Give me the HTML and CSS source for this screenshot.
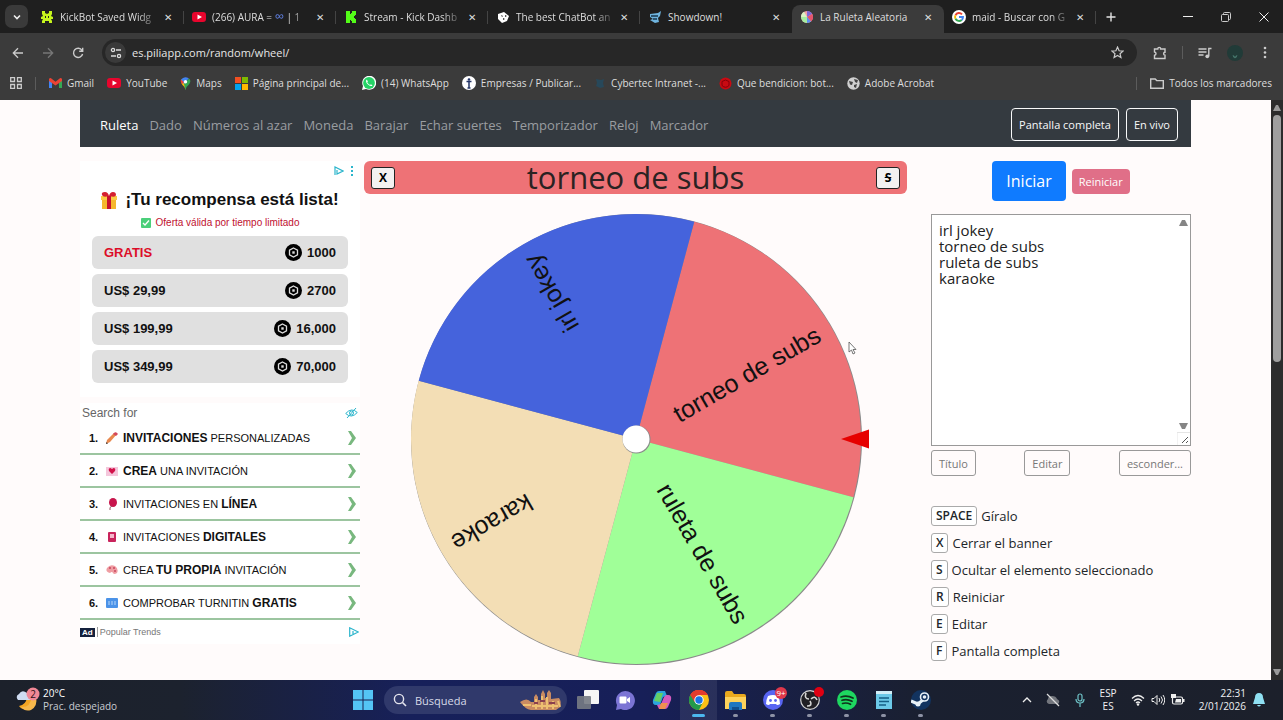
FILE: index.html
```html
<!DOCTYPE html>
<html lang="es">
<head>
    <meta charset="UTF-8">
    <meta name="viewport" content="width=device-width, initial-scale=1.0">
    <title>La Ruleta Aleatoria</title>
    <link rel="stylesheet" href="styles.css">
</head>
<body>
    <!-- Browser tabs -->
    <header class="tabs">
        <button class="tab-search" aria-label="Buscar pestañas"><svg width="10" height="10" viewBox="0 0 10 10"><path d="M2 3.5l3 3 3-3" fill="none" stroke="#eee" stroke-width="1.6"/></svg></button>
        <div class="tab">
            <svg class="fav" viewBox="0 0 12 12"><path d="M1 0h3v2l2 1 2-1V0h3v3l-1 2 2 1v2h-2l1 2v2H8v-2H4v2H1v-2l1-2H0V6l2-1-1-2z" fill="#c6f51d"/><path d="M4 5h1v2H4zM7 5h1v2H7z" fill="#222"/></svg>
            <span class="tab-title faded">KickBot Saved Widg</span><button class="close" aria-label="Cerrar">✕</button>
        </div>
        <div class="tab">
            <svg class="fav wide" viewBox="0 0 14 12"><rect y="1" width="14" height="10" rx="3" fill="#e8052d"/><path d="M5.500 3.500L10 6 5.500 8.500z" fill="#fff"/></svg>
            <span class="tab-title faded">(266) AURA = <span class="inf">∞</span> | 1</span><button class="close" aria-label="Cerrar">✕</button>
        </div>
        <div class="tab">
            <svg class="fav" viewBox="0 0 12 12"><path d="M1 0h4v3h1V2h1V0h4v4h-1v1H9v2h1v1h1v4H7v-2H6V9H5v3H1z" fill="#53fc18"/></svg>
            <span class="tab-title faded">Stream - Kick Dashb</span><button class="close" aria-label="Cerrar">✕</button>
        </div>
        <div class="tab">
            <svg class="fav" viewBox="0 0 12 12"><path d="M1 3l6-2 5 4-2 5-5 2-4-4z" fill="#fff"/><path d="M4 4l2 1-1 1zM8 4l2 1-2 1zM6 7l2 1-2 1z" fill="#222"/></svg>
            <span class="tab-title faded">The best ChatBot an</span><button class="close" aria-label="Cerrar">✕</button>
        </div>
        <div class="tab">
            <svg class="fav" viewBox="0 0 12 12"><path d="M1 3l8-1 3-2-1 5-2 2 1 4-4 1-5-3 3-1-3-2z" fill="#6fb4de"/><path d="M2 5h7M4 8h4" stroke="#17364d" stroke-width="1.300"/></svg>
            <span class="tab-title">Showdown!</span><button class="close" aria-label="Cerrar">✕</button>
        </div>
        <div class="tab active">
            <svg class="fav" viewBox="-6 -6 12 12"><circle r="6" fill="#f3a5a8"/><path d="M0 0V-6A6 6 0 0 1 5.200-3z" fill="#7b68d8"/><path d="M0 0L5.200-3A6 6 0 0 1 4 4.500z" fill="#e4556d"/><path d="M0 0L4 4.500A6 6 0 0 1 0 6z" fill="#5b8ff0"/><path d="M0 0V6A6 6 0 0 1-6 0z" fill="#a5eda0"/><path d="M0 0H-6A6 6 0 0 1-3-5.200z" fill="#d9f2c4"/></svg>
            <span class="tab-title">La Ruleta Aleatoria</span><button class="close" aria-label="Cerrar">✕</button>
        </div>
        <div class="tab last">
            <svg class="fav wide" viewBox="0 0 14 14"><circle cx="7" cy="7" r="7" fill="#fff"/><g fill="none" stroke-width="1.900"><path d="M10 4.300A4 4 0 0 0 3.500 5.200" stroke="#ea4335"/><path d="M3.500 5.200a4 4 0 0 0 0 3.600" stroke="#fbbc05"/><path d="M3.500 8.800A4 4 0 0 0 9.700 10" stroke="#34a853"/><path d="M9.700 10A4 4 0 0 0 11 7H7" stroke="#4285f4"/></g></svg>
            <span class="tab-title faded">maid - Buscar con G</span><button class="close" aria-label="Cerrar">✕</button>
        </div>
        <button class="new-tab" aria-label="Nueva pestaña"><svg width="10" height="10" viewBox="0 0 10 10"><path d="M5 0.500v9M0.500 5h9" stroke="#e3e3e3" stroke-width="1.400"/></svg></button>
        <div class="win-controls">
            <button aria-label="Minimizar"><svg width="10" height="10" viewBox="0 0 10 10"><path d="M0 4.500h10" stroke="#eee"/></svg></button>
            <button aria-label="Restaurar"><svg width="10" height="10" viewBox="0 0 10 10"><path d="M2.500 2V1.500q0-1 1-1h5q1 0 1 1v5q0 1-1 1H8" fill="none" stroke="#ccc"/><rect x=".5" y="2.500" width="7" height="7" rx="1" fill="none" stroke="#ccc"/></svg></button>
            <button aria-label="Cerrar ventana"><svg width="10" height="10" viewBox="0 0 10 10"><path d="M.5.5l9 9M9.500.5l-9 9" stroke="#eee"/></svg></button>
        </div>
    </header>

    <!-- Address bar -->
    <div class="toolbar">
        <button aria-label="Atrás"><svg width="12" height="12" viewBox="0 0 12 12"><path d="M11 6H1.500M6 1.300L1.300 6 6 10.700" fill="none" stroke="#ccc" stroke-width="1.300"/></svg></button>
        <button aria-label="Adelante"><svg width="12" height="12" viewBox="0 0 12 12"><path d="M1 6h9.500M6 1.300L10.700 6 6 10.700" fill="none" stroke="#777" stroke-width="1.300"/></svg></button>
        <button aria-label="Recargar"><svg width="12" height="12" viewBox="0 0 12 12"><path d="M10 3.400A4.600 4.600 0 1 0 10.600 7M10.700.8V4.200H7.200" fill="none" stroke="#ccc" stroke-width="1.400"/></svg></button>
        <div class="omnibox">
            <button class="site-info" aria-label="Información del sitio"><svg width="12" height="12" viewBox="0 0 12 12"><g fill="none" stroke="#ddd" stroke-width="1.300"><circle cx="3" cy="3" r="1.600"/><path d="M6 3h5M1 9h5"/><circle cx="9" cy="9" r="1.600"/></g></svg></button>
            <input type="text" aria-label="Dirección" value="es.piliapp.com/random/wheel/">
            <button aria-label="Favorito"><svg width="13" height="13" viewBox="0 0 14 14"><path d="M7 1.200l1.700 3.900 4.200.4-3.200 2.800 1 4.200L7 10.300l-3.700 2.200 1-4.200L1.100 5.500l4.200-.4z" fill="none" stroke="#ccc" stroke-width="1.300"/></svg></button>
        </div>
        <div class="tools">
            <button aria-label="Extensiones"><svg width="14" height="14" viewBox="0 0 14 14"><path d="M1.500 3h3.300q0-1.600 1.400-1.600T7.600 3H12v3.300q-1.400 0-1.400 1.400T12 9.100v3.400H1.500V9.300q1.500-.2 1.500-1.600T1.500 6z" fill="none" stroke="#ccc" stroke-width="1.400"/></svg></button>
            <span class="sep"></span>
            <button aria-label="Multimedia"><svg width="14" height="12" viewBox="0 0 14 12"><path d="M.5 2h8M.5 5h8M.5 8h5M10.800 9V1.500H13.500" fill="none" stroke="#ccc" stroke-width="1.400"/><circle cx="9.300" cy="9.300" r="1.900" fill="#ccc"/></svg></button>
            <button aria-label="Perfil"><svg width="16" height="16" viewBox="0 0 16 16"><circle cx="8" cy="8" r="8" fill="#213b38"/><path d="M5.500 10l2 1 .5 3 .5-3 2-1-1.500 3H7z" fill="#4f8578"/></svg></button>
            <button class="menu" aria-label="Menú"><svg width="4" height="13" viewBox="0 0 4 13"><g fill="#ccc"><circle cx="2" cy="2" r="1.300"/><circle cx="2" cy="6.500" r="1.300"/><circle cx="2" cy="11" r="1.300"/></g></svg></button>
        </div>
    </div>

    <!-- Bookmarks -->
    <nav class="bookmarks" aria-label="Marcadores">
        <button aria-label="Aplicaciones"><svg width="12" height="12" viewBox="0 0 12 12"><path d="M.7.7h3.800v3.800H.7zM7.500.7h3.800v3.800H7.500zM.7 7.500h3.800v3.800H.7zM7.500 7.500h3.800v3.800H7.500z" fill="none" stroke="#ccc" stroke-width="1.300"/></svg></button>
        <span class="sep"></span>
        <a href="#"><svg width="13" height="10" viewBox="0 0 13 10"><path d="M0 1h3v9H0z" fill="#4285f4"/><path d="M10 1h3v9h-3z" fill="#34a853"/><path d="M0 1q1-2 3 0l3.500 2.700L10 1q2-2 3 0v2L6.500 7.500 0 3z" fill="#ea4335"/></svg>Gmail</a>
        <a href="#"><svg width="14" height="10" viewBox="0 0 14 10"><rect width="14" height="10" rx="3" fill="#e8052d"/><path d="M5.500 2.500L10 5 5.500 7.500z" fill="#fff"/></svg>YouTube</a>
        <a href="#"><svg width="11" height="13" viewBox="0 0 11 13"><path d="M5.500 13Q5 9.500 2.500 8 0 4 2 2l3.500 3z" fill="#fbbc05"/><path d="M5.500 13Q6 9.500 8.500 8 12 4 9 1.500L4 7z" fill="#34a853"/><path d="M1 2.700Q4-1.500 8.800 1.300L4 7z" fill="#4285f4"/><path d="M1 2.700L4 5 2 7Q0 4 1 2.700z" fill="#ea4335"/><circle cx="5.500" cy="4.700" r="1.700" fill="#fff"/></svg>Maps</a>
        <a href="#"><svg width="13" height="13" viewBox="0 0 13 13"><path d="M0 0h6v6H0z" fill="#f25022"/><path d="M7 0h6v6H7z" fill="#7fba00"/><path d="M0 7h6v6H0z" fill="#00a4ef"/><path d="M7 7h6v6H7z" fill="#ffb900"/></svg>Página principal de...</a>
        <a href="#"><svg width="14" height="14" viewBox="0 0 14 14"><path d="M0 14l1-4A7 7 0 1 1 4 13z" fill="#fff"/><circle cx="7" cy="7" r="5.900" fill="#25d366"/><path d="M4.500 3.500Q3 6 6 8.500T10.500 9.500L9 8.300 8 9Q6 8 5.200 6.200L6 5.300z" fill="#fff"/></svg>(14) WhatsApp</a>
        <a href="#"><svg width="14" height="14" viewBox="0 0 14 14"><circle cx="7" cy="7" r="7" fill="#fff"/><circle cx="7" cy="3.500" r="1.300" fill="#223366"/><path d="M4.500 5.500h5M7 5.500V12M5.500 12h3" stroke="#223366" stroke-width="1.500"/></svg>Empresas / Publicar...</a>
        <a href="#"><svg width="12" height="12" viewBox="0 0 12 12"><path d="M2 2l5 1 3-1-1 4 1 4-4 1-4-2 1-3z" fill="#27485a"/></svg>Cybertec Intranet -...</a>
        <a href="#"><svg width="13" height="13" viewBox="0 0 13 13"><circle cx="6.500" cy="6.500" r="6" fill="#c90a12"/><path d="M3 4.500q3.500-3 7 0v4q-3.500 3.500-7 0z" fill="none" stroke="#850008"/></svg>Que bendicion: bot...</a>
        <a href="#"><svg width="13" height="13" viewBox="0 0 13 13"><circle cx="6.500" cy="6.500" r="6.200" fill="#d0d0d0"/><path d="M2 4l4 1-1 3-2-.5zM7 2l4 1-1 3-2-1zM7 8l3-1-1 4-2-1z" fill="#444"/></svg>Adobe Acrobat</a>
        <span class="sep push"></span>
        <a href="#"><svg width="14" height="11" viewBox="0 0 14 11"><path d="M.7 1h4.500l1.500 1.600h6.600v7.700H.7z" fill="none" stroke="#ccc" stroke-width="1.400"/></svg>Todos los marcadores</a>
    </nav>

    <div class="viewport">
        <div class="page">
            <nav class="navbar">
                <a href="#" class="current">Ruleta</a>
                <a href="#">Dado</a>
                <a href="#">Números al azar</a>
                <a href="#">Moneda</a>
                <a href="#">Barajar</a>
                <a href="#">Echar suertes</a>
                <a href="#">Temporizador</a>
                <a href="#">Reloj</a>
                <a href="#">Marcador</a>
                <div class="nav-buttons">
                    <button>Pantalla completa</button>
                    <button>En vivo</button>
                </div>
            </nav>

            <main class="columns">
                <aside>
                    <section class="reward">
                        <div class="ad-marks">
                            <svg width="10" height="10" viewBox="0 0 10 10"><path d="M1 9V1l8 4-6 3V4" fill="none" stroke="#2bb5cc" stroke-width="1.200"/></svg>
                            <svg width="4" height="10" viewBox="0 0 4 10"><path d="M1 0h2v2H1zM1 4h2v2H1zM1 8h2v2H1z" fill="#2bb5cc"/></svg>
                        </div>
                        <h2><svg width="16" height="17" viewBox="0 0 16 17"><path d="M1 5h14v12H1z" fill="#f5b72e"/><path d="M0 4h16v4H0z" fill="#fbcb45"/><path d="M6 4h4v13H6z" fill="#c8102e"/><path d="M8 4Q2 6 1 3T4 0q3 0 4 4 1-4 4-4t3 3-7 1" fill="#d5202f"/></svg>¡Tu recompensa está lista!</h2>
                        <p class="offer"><svg width="10" height="10" viewBox="0 0 10 10"><rect width="10" height="10" rx="1" fill="#4bcf7a"/><path d="M2 5l2 2 4-4.500" fill="none" stroke="#fff" stroke-width="1.300"/></svg>Oferta válida por tiempo limitado</p>
                        <ul class="prices">
                            <li><span class="free">GRATIS</span><span class="amount"><svg class="coin" viewBox="0 0 17 17"><circle cx="8.500" cy="8.500" r="8.500"/><path d="M8.500 4l4 2.200v4.600l-4 2.200-4-2.200V6.200z" fill="none" stroke="#ddd" stroke-width="1.300"/><path d="M7.300 7.300h2.400v2.400H7.300z" fill="#ddd"/></svg>1000</span></li>
                            <li><span>US$ 29,99</span><span class="amount"><svg class="coin" viewBox="0 0 17 17"><circle cx="8.500" cy="8.500" r="8.500"/><path d="M8.500 4l4 2.200v4.600l-4 2.200-4-2.200V6.200z" fill="none" stroke="#ddd" stroke-width="1.300"/><path d="M7.300 7.300h2.400v2.400H7.300z" fill="#ddd"/></svg>2700</span></li>
                            <li><span>US$ 199,99</span><span class="amount"><svg class="coin" viewBox="0 0 17 17"><circle cx="8.500" cy="8.500" r="8.500"/><path d="M8.500 4l4 2.200v4.600l-4 2.200-4-2.200V6.200z" fill="none" stroke="#ddd" stroke-width="1.300"/><path d="M7.300 7.300h2.400v2.400H7.300z" fill="#ddd"/></svg>16,000</span></li>
                            <li><span>US$ 349,99</span><span class="amount"><svg class="coin" viewBox="0 0 17 17"><circle cx="8.500" cy="8.500" r="8.500"/><path d="M8.500 4l4 2.200v4.600l-4 2.200-4-2.200V6.200z" fill="none" stroke="#ddd" stroke-width="1.300"/><path d="M7.300 7.300h2.400v2.400H7.300z" fill="#ddd"/></svg>70,000</span></li>
                        </ul>
                    </section>

                    <section class="trends">
                        <div class="trends-head">Search for
                            <svg width="13" height="12" viewBox="0 0 13 12"><path d="M.7 6.500Q6.500 0 12.300 5.500 6.500 12 .7 6.500zM2 11l9-10" fill="none" stroke="#2bb5cc"/><circle cx="6.500" cy="6" r="2" fill="none" stroke="#2bb5cc"/></svg>
                        </div>
                        <ol>
                            <li><a href="#"><b>1.</b><svg class="emoji" viewBox="0 0 12 12"><path d="M0 12l1-4 7-7q2-1 3 1l-7 8z" fill="#e8894f"/><path d="M8 1q2-2 4 1l-2 2-3-2z" fill="#d4485c"/><path d="M0 12l.5-2L2 11.500z" fill="#333"/></svg><span><strong>INVITACIONES</strong> PERSONALIZADAS</span><svg class="chevron" viewBox="0 0 9 14"><path d="M1 0h3l5 7-5 7H1l4-7z" fill="#78b87f"/></svg></a></li>
                            <li><a href="#"><b>2.</b><svg class="emoji" viewBox="0 0 12 12"><path d="M0 2h12v9H0z" fill="#f4c6db"/><path d="M6 9L3 6q-1-3 1.500-3L6 4l1.500-1Q10 3 9 6z" fill="#d2124a"/></svg><span><strong>CREA</strong> UNA INVITACIÓN</span><svg class="chevron" viewBox="0 0 9 14"><path d="M1 0h3l5 7-5 7H1l4-7z" fill="#78b87f"/></svg></a></li>
                            <li><a href="#"><b>3.</b><svg class="emoji" viewBox="0 0 12 12"><ellipse cx="7" cy="4.500" rx="4" ry="4.500" fill="#c7154c"/><path d="M6 8q-3 1-2 4" stroke="#97505f" fill="none"/></svg><span>INVITACIONES EN <strong>LÍNEA</strong></span><svg class="chevron" viewBox="0 0 9 14"><path d="M1 0h3l5 7-5 7H1l4-7z" fill="#78b87f"/></svg></a></li>
                            <li><a href="#"><b>4.</b><svg class="emoji" viewBox="0 0 12 12"><rect x="2" y="1" width="8" height="10" rx="1" fill="#c9245c"/><path d="M4 3h4v4H4z" fill="#f5b6cb"/></svg><span>INVITACIONES <strong>DIGITALES</strong></span><svg class="chevron" viewBox="0 0 9 14"><path d="M1 0h3l5 7-5 7H1l4-7z" fill="#78b87f"/></svg></a></li>
                            <li><a href="#"><b>5.</b><svg class="emoji" viewBox="0 0 12 12"><path d="M1 4q3-4 8-2 4 3 2 7-3 2-4 0-1-2-3 0-5-1-3-5z" fill="#ef9da2"/><g fill="#c8475f"><circle cx="4" cy="4" r="1"/><circle cx="8" cy="4" r="1"/><circle cx="9" cy="7" r="1"/></g></svg><span>CREA <strong>TU PROPIA</strong> INVITACIÓN</span><svg class="chevron" viewBox="0 0 9 14"><path d="M1 0h3l5 7-5 7H1l4-7z" fill="#78b87f"/></svg></a></li>
                            <li><a href="#"><b>6.</b><svg class="emoji" viewBox="0 0 12 12"><rect y="1" width="12" height="10" rx="1" fill="#4b93e8"/><path d="M2 5h8M2 7h8" stroke="#b9d8fa" stroke-dasharray="2 1"/></svg><span>COMPROBAR TURNITIN <strong>GRATIS</strong></span><svg class="chevron" viewBox="0 0 9 14"><path d="M1 0h3l5 7-5 7H1l4-7z" fill="#78b87f"/></svg></a></li>
                        </ol>
                        <div class="trends-foot"><span class="ad-tag">Ad</span><span class="foot-text">Popular Trends</span>
                            <svg width="10" height="10" viewBox="0 0 10 10"><path d="M.7.8v8.400L9.300 5z M4 4v3" fill="none" stroke="#2bb5cc" stroke-width="1.200"/></svg>
                        </div>
                    </section>
                </aside>

                <section class="wheel-col">
                    <div class="banner">
                        <button>X</button>
                        <h1>torneo de subs</h1>
                        <button><s>S</s></button>
                    </div>
                    <svg class="wheel" viewBox="-234 -228 468 456">
                        <circle class="shadow" cx=".5" cy=".5" r="225.500"/>
                        <g transform="rotate(15)">
                            <path d="M0 0V-225A225 225 0 0 1 225 0z" fill="#ee7276"/>
                            <path d="M0 0H225A225 225 0 0 1 0 225z" fill="#a0ff98"/>
                            <path d="M0 0V225A225 225 0 0 1-225 0z" fill="#f3deb5"/>
                            <path d="M0 0H-225A225 225 0 0 1 0-225z" fill="#4563dc"/>
                        </g>
                        <g class="labels">
                            <text x="211" transform="rotate(-30)" dy="8">torneo de subs</text>
                            <text x="211" transform="rotate(60)" dy="8">ruleta de subs</text>
                            <text x="211" transform="rotate(150)" dy="8">karaoke</text>
                            <text x="211" transform="rotate(240)" dy="8">irl jokey</text>
                        </g>
                        <circle class="shadow" cx=".5" cy=".5" r="14"/>
                        <circle r="13.500" fill="#fff"/>
                        <path d="M205 0l28-9.500v19z" fill="#e60000"/>
                    </svg>
                    <svg class="cursor" width="9" height="14" viewBox="0 0 9 14"><path d="M1 1v10l2.500-2L5 13l2-1-2-3.500h3z" fill="#fff" stroke="#555" stroke-width=".8"/></svg>
                </section>

                <section class="side">
                    <div class="actions">
                        <button class="start">Iniciar</button>
                        <button class="reset">Reiniciar</button>
                    </div>
                    <div class="list-box">
                        <textarea aria-label="Elementos de la ruleta">irl jokey
torneo de subs
ruleta de subs
karaoke</textarea>
                        <svg class="arrow up" width="9" height="7" viewBox="0 0 9 7"><path d="M0 7l3-6h3l3 6z" fill="#858585"/></svg>
                        <svg class="arrow down" width="9" height="7" viewBox="0 0 9 7"><path d="M0 0l3 6h3l3-6z" fill="#858585"/></svg>
                        <svg class="grip" width="13" height="13" viewBox="0 0 13 13"><path d="M0 0h13v13H0z" fill="#fff"/><path d="M0 13V.5h13" fill="none" stroke="#e5e5e5"/><path d="M5 11l6-6M9 11l2-2" stroke="#555"/></svg>
                    </div>
                    <div class="list-actions">
                        <button>Título</button>
                        <button>Editar</button>
                        <button>esconder...</button>
                    </div>
                    <ul class="keys">
                        <li><kbd>SPACE</kbd>Gíralo</li>
                        <li><kbd>X</kbd>Cerrar el banner</li>
                        <li><kbd>S</kbd>Ocultar el elemento seleccionado</li>
                        <li><kbd>R</kbd>Reiniciar</li>
                        <li><kbd>E</kbd>Editar</li>
                        <li><kbd>F</kbd>Pantalla completa</li>
                    </ul>
                </section>
            </main>
        </div>
        <div class="scrollbar">
            <svg width="8" height="7" viewBox="0 0 8 7"><path d="M0 7l3-6h2l3 6z" fill="#999"/></svg>
            <div class="thumb"></div>
            <svg width="8" height="7" viewBox="0 0 8 7"><path d="M0 0l3 6h2l3-6z" fill="#999"/></svg>
        </div>
    </div>

    <!-- Taskbar -->
    <footer class="taskbar">
        <div class="weather">
            <svg width="26" height="28" viewBox="0 0 26 28"><path d="M16 10q5 9-5 13-5 1-8-3 7-1 8-9z" fill="#f5a623"/><path d="M20 11q2 9-5 13-6 2-10-3 9 1 11-10z" fill="#f7b84b"/><path d="M2 14q-3-4 1-6 3-5 8-1 5 2 4 7z" fill="#cfdcf2"/><circle cx="17" cy="8" r="6.500" fill="#f08896"/><text x="17" y="12" font-size="10" text-anchor="middle" fill="#301018">2</text></svg>
            <div><span class="temp">20°C</span><br>Prac. despejado</div>
        </div>
        <div class="apps">
            <button aria-label="Inicio"><svg width="20" height="20" viewBox="0 0 20 20"><path d="M0 0h9.500v9.500H0zM10.500 0H20v9.500h-9.500zM0 10.500h9.500V20H0zM10.500 10.500H20V20h-9.500z" fill="#54c4f5"/></svg></button>
            <label class="search">
                <svg width="14" height="14" viewBox="0 0 14 14"><circle cx="6" cy="6" r="4.600" fill="none" stroke="#e5e5ee" stroke-width="1.400"/><path d="M9.500 9.500L13 13" stroke="#e5e5ee" stroke-width="1.600"/></svg>
                <input type="text" placeholder="Búsqueda" aria-label="Búsqueda">
                <svg width="43" height="22" viewBox="0 0 43 22"><path d="M0 13q7-5 11 0h3V8l2-3 2 3v3h3V5l2-4 2 4v4h2V4l2-3 2 3v6l8-1q3 4 1 9l-4 3H11q-6-1-11-8z" fill="#c98b62"/><path d="M3 16h8M16 10v10M22 7v13M27 8v12M33 12v8M38 12l2 6M12 17h26" stroke="#eec071" stroke-width="2"/><path d="M14 14h4M20 12h5M29 14h6" stroke="#8a3f4d" stroke-width="2"/></svg>
            </label>
            <button aria-label="Vista de tareas"><svg width="22" height="20" viewBox="0 0 22 20"><rect x="7" y="0" width="15" height="14" rx="1" fill="#f5f5f5"/><rect x="0" y="6" width="14" height="13" rx="1" fill="#777b84" opacity=".9"/></svg></button>
            <button aria-label="Chat"><svg width="20" height="20" viewBox="0 0 20 20"><path d="M1 20l1-5A9.500 9.500 0 1 1 6 19z" fill="#7b74d4"/><rect x="4.500" y="6.500" width="7" height="7" rx="1" fill="#fff"/><path d="M12 9l3-2v6l-3-2z" fill="#fff"/></svg></button>
            <button aria-label="Copilot"><svg width="20" height="20" viewBox="0 0 20 20"><path d="M7 1h6l2 5-4 1-3 8H4q-4 0-3-5l3-7q1-2 3-2z" fill="#2ba4dd"/><path d="M5 3l-3 8 6 1 3-9z" fill="#65cf65"/><path d="M14 5h2q4 0 3 5l-3 7q-1 2-3 2H7l-2-4 4-1 3-7z" fill="#d45abe"/><path d="M9 13l-2 6h6l3-6z" fill="#f09150"/></svg></button>
            <button class="running focused" aria-label="Chrome"><svg width="20" height="20" viewBox="-10 -10 20 20"><circle r="10" fill="#fbc116"/><path d="M0 0L-8.700-5A10 10 0 0 1 8.700-5z" fill="#e33b2e"/><path d="M0 0L-8.700-5A10 10 0 0 0 0 10L4 2z" fill="#239a4b"/><path d="M0-5H8.700L4 2z" fill="#fbc116"/><path d="M-8.700-5A10 10 0 0 1 8.700-5H0L-4.500 2z" fill="#e33b2e"/><circle r="4.700" fill="#fff"/><circle r="3.700" fill="#1a73e8"/></svg></button>
            <button class="running" aria-label="Explorador"><svg width="21" height="19" viewBox="0 0 21 19"><path d="M0 2q0-2 2-2h5l2 3h10q2 0 2 2v13H0z" fill="#e9a91e"/><path d="M0 6h21v12H0z" fill="#fdd25b"/><path d="M4 19v-6q0-2 2-2h9q2 0 2 2v6z" fill="#1f77c2"/><path d="M7 16h7v3H7z" fill="#114f8f"/></svg></button>
            <button class="running" aria-label="Discord"><svg width="20" height="20" viewBox="0 0 20 20"><circle cx="10" cy="10" r="10" fill="#5865f2"/><path d="M5 6q5-2 10 0 2 4 2 8-3 2-4 0H7q-1 2-4 0 0-4 2-8z" fill="#fff"/><circle cx="7.500" cy="10.500" r="1.400" fill="#5865f2"/><circle cx="12.500" cy="10.500" r="1.400" fill="#5865f2"/></svg><span class="badge">9+</span></button>
            <button class="running" aria-label="OBS"><svg width="20" height="20" viewBox="-10 -10 20 20"><circle r="9.300" fill="#201f24" stroke="#d5d5d5" stroke-width="1.200"/><g fill="none" stroke="#d5d5d5" stroke-width="1.600"><path d="M-1-1Q-6-1-4-7"/><path d="M1-1Q5-5 7 0"/><path d="M0 1Q3 6-3 6"/></g></svg><span class="badge dot"></span></button>
            <button class="running" aria-label="Spotify"><svg width="20" height="20" viewBox="0 0 20 20"><circle cx="10" cy="10" r="10" fill="#1ed760"/><path d="M4 7q6-2 12 1M5 10.300q5-1.600 10 1M5.500 13.500q4-1.300 8 .8" fill="none" stroke="#10301b" stroke-width="1.700" stroke-linecap="round"/></svg></button>
            <button class="running" aria-label="Bloc de notas"><svg width="16" height="20" viewBox="0 0 16 20"><path d="M0 2h16v17H0z" fill="#6cc9e8"/><path d="M0 1h16v3H0z" fill="#d2eef7"/><path d="M3 8h10M3 11.500h10M3 15h7" stroke="#155f85" stroke-width="1.500"/></svg></button>
            <button class="running" aria-label="Steam"><svg width="20" height="20" viewBox="0 0 20 20"><circle cx="10" cy="10" r="10" fill="#12335f"/><path d="M0 11l7 3 6-5" stroke="#e8f1f8" stroke-width="3" fill="none"/><circle cx="13.500" cy="7" r="4" fill="#12335f" stroke="#e8f1f8" stroke-width="1.600"/><circle cx="7" cy="14" r="2.500" fill="#e8f1f8"/><circle cx="13.500" cy="7" r="1.800" fill="#e8f1f8"/></svg></button>
        </div>
        <div class="tray">
            <svg width="10" height="10" viewBox="0 0 10 10"><path d="M1 7l4-4 4 4" fill="none" stroke="#eee" stroke-width="1.300"/></svg>
            <svg width="14" height="14" viewBox="0 0 14 14"><path d="M3 11q-4-2-1-5 0-3 4-3t5 3q4 2 1 5z" fill="#73767d"/><path d="M1 1l12 12" stroke="#ddd" stroke-width="1.200"/></svg>
            <svg width="12" height="14" viewBox="0 0 12 14"><rect x="4" y="1" width="4" height="7" rx="2" fill="none" stroke="#6fc4c8" stroke-width="1.200"/><path d="M2 6q0 4 4 4t4-4M6 10v4" fill="none" stroke="#6fc4c8" stroke-width="1.200"/></svg>
            <div class="lang">ESP<br>ES</div>
            <div class="status">
                <svg width="14" height="12" viewBox="0 0 14 12"><path d="M1 4.500q6-6 12 0M3 7q4-4 8 0M5 9q2-2 4 0" fill="none" stroke="#eee" stroke-width="1.200"/><circle cx="7" cy="10.500" r="1.200" fill="#eee"/></svg>
                <svg width="14" height="12" viewBox="0 0 14 12"><path d="M1 4.500h2L6 1.500v9L3 7.500H1zM8 4q1.500 2 0 4M10 2.500q3 3.500 0 7M12 1q3.500 5 0 10" fill="none" stroke="#eee"/></svg>
                <svg width="14" height="12" viewBox="0 0 14 12"><rect x="1.500" y="3" width="10" height="7" rx="1.500" fill="none" stroke="#eee" stroke-width="1.200"/><path d="M5 5h5v3.500H4zM12 5h1.500v3H12zM0 0h5v4H0z" fill="#eee"/></svg>
            </div>
            <div class="clock">22:31<br>2/01/2026</div>
            <svg width="12" height="14" viewBox="0 0 12 14"><path d="M6 0q4 0 4 4.500L12 11H0l2-6.500Q2 0 6 0zM4 12h4q-2 3-4 0z" fill="#8fe0f2"/></svg>
        </div>
    </footer>
</body>
</html>
```
FILE: styles.css
```css
:root {
    --tabs: #1f1f1f;
    --toolbar: #3b3b3b;
    --field: #272727;
    --ui-text: #dedede;
    --page: #fffbfb;
    --nav: #343a40;
    --coral: #ee7276;
    --ui-font: "Open Sans", "Noto Sans", sans-serif;
    --ad-font: "Liberation Sans", Arial, sans-serif;
}

* {
    margin: 0;
    padding: 0;
    box-sizing: border-box;
}

body {
    display: flex;
    flex-direction: column;
    height: 100vh;
    overflow: hidden;
    font-family: var(--ui-font);
    font-size: 13px;
    color: #212529;
}

button {
    font-family: inherit;
    background: none;
    border: none;
    cursor: pointer;
}

svg {
    display: block;
    flex-shrink: 0;
}

a {
    color: inherit;
    text-decoration: none;
}

ul, ol {
    list-style: none;
}

/* Tabs */
.tabs {
    display: flex;
    align-items: flex-end;
    height: 33px;
    padding-left: 5px;
    background: var(--tabs);
    color: var(--ui-text);
    font-size: 10px;
}

.tab-search {
    display: grid;
    place-items: center;
    width: 23px;
    height: 23px;
    margin: 0 4px 5px 0;
    border-radius: 7px;
    background: #3a3a3a;
}

.tab {
    display: flex;
    flex: 0 1 152px;
    align-items: center;
    min-width: 0;
    height: 28px;
    padding: 0 10px 4px 9px;
}

.tab:not(.active)::after {
    content: "";
    width: 1px;
    height: 13px;
    margin: 0 -10px 0 9px;
    background: #444;
}

.tab:has(+ .active)::after {
    visibility: hidden;
}

.tab.active {
    border-radius: 8px 8px 0 0;
    background: var(--toolbar);
}

.fav {
    width: 12px;
    height: 12px;
}

.fav.wide {
    width: 14px;
    height: 14px;
    margin: 0 -1px;
}

.tab-title {
    flex: 1;
    margin: 0 2px 0 7px;
    white-space: nowrap;
}

.faded {
    mask-image: linear-gradient(to right, #000 78%, transparent);
}

.inf {
    color: #5f7fe0;
    font-size: 13px;
    line-height: 10px;
}

.close {
    width: 12px;
    color: #ddd;
    font-size: 10px;
}

.new-tab {
    display: grid;
    place-items: center;
    width: 30px;
    height: 32px;
}

.win-controls {
    display: flex;
    margin-left: auto;
}

.win-controls button {
    display: grid;
    place-items: center;
    width: 38px;
    height: 32px;
}

/* Toolbar */
.toolbar {
    display: flex;
    align-items: center;
    height: 39px;
    padding: 0 16px 0 12px;
    background: var(--toolbar);
}

.toolbar > button {
    width: 30px;
}

.omnibox {
    display: flex;
    flex: 1;
    align-items: center;
    height: 27px;
    padding: 0 13px 0 3px;
    border-radius: 14px;
    background: var(--field);
}

.omnibox input {
    flex: 1;
    margin-left: 6px;
    border: none;
    outline: none;
    background: none;
    color: #e6e6e6;
    font: 11px var(--ui-font);
}

.site-info {
    display: grid;
    place-items: center;
    width: 21px;
    height: 21px;
    border-radius: 50%;
    background: #3a3a3a;
}

.tools {
    display: flex;
    align-items: center;
    gap: 15px;
    padding-left: 16px;
}

.menu {
    margin-left: 5px;
}

.sep {
    width: 1px;
    height: 13px;
    background: #5c5c5c;
}

/* Bookmarks */
.bookmarks {
    display: flex;
    align-items: center;
    gap: 13px;
    height: 28px;
    padding: 0 11px 6px 10px;
    background: var(--toolbar);
    color: var(--ui-text);
    font-size: 10px;
    white-space: nowrap;
}

.bookmarks a {
    display: flex;
    align-items: center;
    gap: 5px;
}

.push {
    margin-left: auto;
}

/* Page */
.viewport {
    display: flex;
    flex: 1;
    min-height: 0;
    background: var(--page);
}

.page {
    flex: 1;
    overflow: hidden;
}

.scrollbar {
    display: flex;
    flex-direction: column;
    align-items: center;
    width: 12px;
    padding: 4px 0;
    background: #2c2c2c;
}

.thumb {
    width: 8px;
    height: 247px;
    margin: 4px 0 auto;
    border-radius: 4px;
    background: #9f9f9f;
}

.navbar {
    display: flex;
    align-items: center;
    gap: 11px;
    max-width: 1111px;
    height: 47px;
    margin: 0 auto;
    padding: 2px 13px 0 20px;
    background: var(--nav);
    color: #9a9da0;
    white-space: nowrap;
}

.navbar .current {
    color: #fff;
}

.nav-buttons {
    display: flex;
    gap: 7px;
    margin-left: auto;
}

.nav-buttons button {
    height: 33px;
    padding: 0 7px;
    border: 1px solid #f8f9fa;
    border-radius: 4px;
    color: #f8f9fa;
    font-size: 11px;
}

.columns {
    display: grid;
    grid-template-columns: 280px 1fr 260px;
    max-width: 1111px;
    margin: 14px auto 0;
}

/* Ads */
.reward {
    height: 236px;
    padding: 4px 12px 0;
    background: #fff;
    font-family: var(--ad-font);
}

.ad-marks {
    display: flex;
    justify-content: flex-end;
    gap: 6px;
    margin-right: -6px;
    padding-top: 1px;
}

.reward h2 {
    display: flex;
    align-items: center;
    justify-content: center;
    gap: 8px;
    margin-top: 14px;
    color: #111;
    font-size: 17px;
    line-height: 20px;
}

.offer {
    display: flex;
    align-items: center;
    justify-content: center;
    gap: 5px;
    margin: 6px 0;
    color: #c01030;
    font-size: 10px;
    line-height: 14px;
}

.prices {
    display: grid;
    gap: 5px;
    margin-top: 6px;
}

.prices li {
    display: flex;
    align-items: center;
    justify-content: space-between;
    height: 33px;
    padding: 0 12px;
    border-radius: 6px;
    background: #e0e0e0;
    color: #111;
    font-size: 13px;
    font-weight: bold;
}

.free {
    color: #dc0d28;
}

.amount {
    display: flex;
    align-items: center;
    gap: 5px;
}

.coin {
    width: 17px;
    height: 17px;
}

.trends {
    margin-top: 6px;
    background: #fff;
    color: #111;
    font: 11px var(--ad-font);
}

.trends-head {
    display: flex;
    align-items: center;
    justify-content: space-between;
    height: 19px;
    padding: 0 2px;
    color: #666;
    font-size: 12px;
}

.trends a {
    display: flex;
    align-items: center;
    height: 33px;
    padding: 0 4px 0 9px;
    border-bottom: 2px solid #9cc5a0;
    white-space: nowrap;
}

.trends b {
    width: 17px;
}

.trends strong {
    font-size: 12px;
}

.emoji {
    width: 12px;
    height: 12px;
    margin-right: 5px;
}

.chevron {
    width: 9px;
    height: 14px;
    margin-left: auto;
}

.trends-foot {
    display: flex;
    align-items: center;
    gap: 2px;
    height: 24px;
    padding-right: 1px;
    color: #777;
    font-size: 9px;
}

.trends-foot svg {
    margin-left: auto;
}

.ad-tag {
    padding: 0 2px;
    background: #14213d;
    color: #fff;
    font-size: 8px;
    font-weight: bold;
}

.foot-text {
    padding-left: 2px;
    border-left: 1px solid #999;
}

/* Wheel */
.wheel-col {
    position: relative;
    padding: 0 24px 0 4px;
}

.banner {
    display: flex;
    align-items: center;
    justify-content: space-between;
    height: 33px;
    padding: 0 7px;
    border-radius: 6px;
    background: var(--coral);
}

.banner h1 {
    color: #2a2222;
    font-size: 31px;
    font-weight: 400;
    line-height: 33px;
}

.banner button {
    width: 24px;
    height: 22px;
    border: 1px solid #222;
    border-radius: 3px;
    background: #f3f1f1;
    color: #000;
    font-size: 12px;
    font-weight: bold;
}

.wheel {
    width: 100%;
    max-width: 468px;
    margin: 17px auto 0;
}

.shadow {
    fill: #8a8a8a;
}

.labels text {
    font: 25px var(--ad-font);
    text-anchor: end;
    fill: #111;
}

.cursor {
    position: absolute;
    top: 180px;
    right: 74px;
}

/* Side panel */
.actions {
    display: flex;
    align-items: center;
    justify-content: center;
    gap: 6px;
}

.start,
.reset {
    border-radius: 4px;
    color: #fff;
}

.start {
    height: 40px;
    padding: 0 14px;
    background: #0f7bff;
    font-size: 16px;
}

.reset {
    height: 25px;
    padding: 0 7px;
    background: #e06f88;
    font-size: 11px;
}

.list-box {
    position: relative;
    margin-top: 13px;
}

.list-box textarea {
    display: block;
    width: 100%;
    height: 232px;
    padding: 7px;
    border: 1px solid #999;
    outline: none;
    resize: none;
    background: #fff;
    color: #222;
    font: 15px/16px var(--ui-font);
}

.arrow,
.grip {
    position: absolute;
    right: 3px;
    pointer-events: none;
}

.up {
    top: 5px;
}

.down {
    bottom: 16px;
}

.grip {
    right: 1px;
    bottom: 1px;
}

.list-actions {
    display: flex;
    justify-content: space-between;
    margin-top: 4px;
}

.list-actions button {
    height: 26px;
    padding: 0 7px;
    border: 1px solid #999;
    border-radius: 3px;
    color: #777;
    font-size: 11px;
}

.keys {
    display: grid;
    gap: 7px;
    margin-top: 30px;
}

.keys li {
    display: flex;
    align-items: center;
    gap: 4px;
    height: 20px;
    white-space: nowrap;
}

.keys kbd {
    height: 20px;
    padding: 0 4px;
    border: 1px solid #aaa;
    border-radius: 3px;
    background: #fff;
    font: 600 12px/18px var(--ui-font);
}

/* Taskbar */
.taskbar {
    display: grid;
    grid-template-columns: 1fr auto 1fr;
    align-items: center;
    height: 40px;
    background: linear-gradient(to right, #1c212b 0, #1c222e 14%, #17205a 32%, #171f58 50%, #1a2030 72%, #1c202b 100%);
    color: #f0f0f4;
    font-size: 10px;
    line-height: 13px;
}

.weather {
    display: flex;
    align-items: center;
    gap: 1px;
    padding-left: 16px;
    color: #c9ccd2;
}

.temp {
    color: #fff;
}

.apps {
    display: flex;
    align-items: center;
}

.apps button {
    position: relative;
    display: grid;
    place-items: center;
    width: 37px;
    height: 40px;
}

.apps .running::after {
    content: "";
    position: absolute;
    bottom: 3px;
    left: 16px;
    width: 5px;
    height: 3px;
    border-radius: 2px;
    background: #8d92a5;
}

.apps .focused {
    background: rgba(255, 255, 255, 0.08);
}

.apps .focused::after {
    left: 12px;
    width: 13px;
    background: #4cb8ef;
}

.badge {
    position: absolute;
    top: 7px;
    right: 4px;
    width: 12px;
    height: 12px;
    border-radius: 50%;
    background: #e0384b;
    color: #fff;
    font-size: 8px;
    line-height: 12px;
}

.badge.dot {
    width: 10px;
    height: 10px;
    background: #e00012;
}

.search {
    display: flex;
    align-items: center;
    width: 183px;
    height: 28px;
    margin: 0 2px 0 3px;
    padding: 0 4px 0 9px;
    border-radius: 14px;
    background: #30396b;
}

.search input {
    flex: 1;
    width: 0;
    margin-left: 8px;
    border: none;
    outline: none;
    background: none;
    color: #fff;
    font: 11px var(--ui-font);
}

.search input::placeholder {
    color: #d7d9e8;
}

.tray {
    display: flex;
    align-items: center;
    justify-content: flex-end;
    gap: 14px;
    padding-right: 18px;
}

.lang {
    text-align: center;
}

.status {
    display: flex;
    gap: 6px;
}

.clock {
    text-align: right;
}

.tray .clock + svg {
    margin-left: -7px;
}
```
